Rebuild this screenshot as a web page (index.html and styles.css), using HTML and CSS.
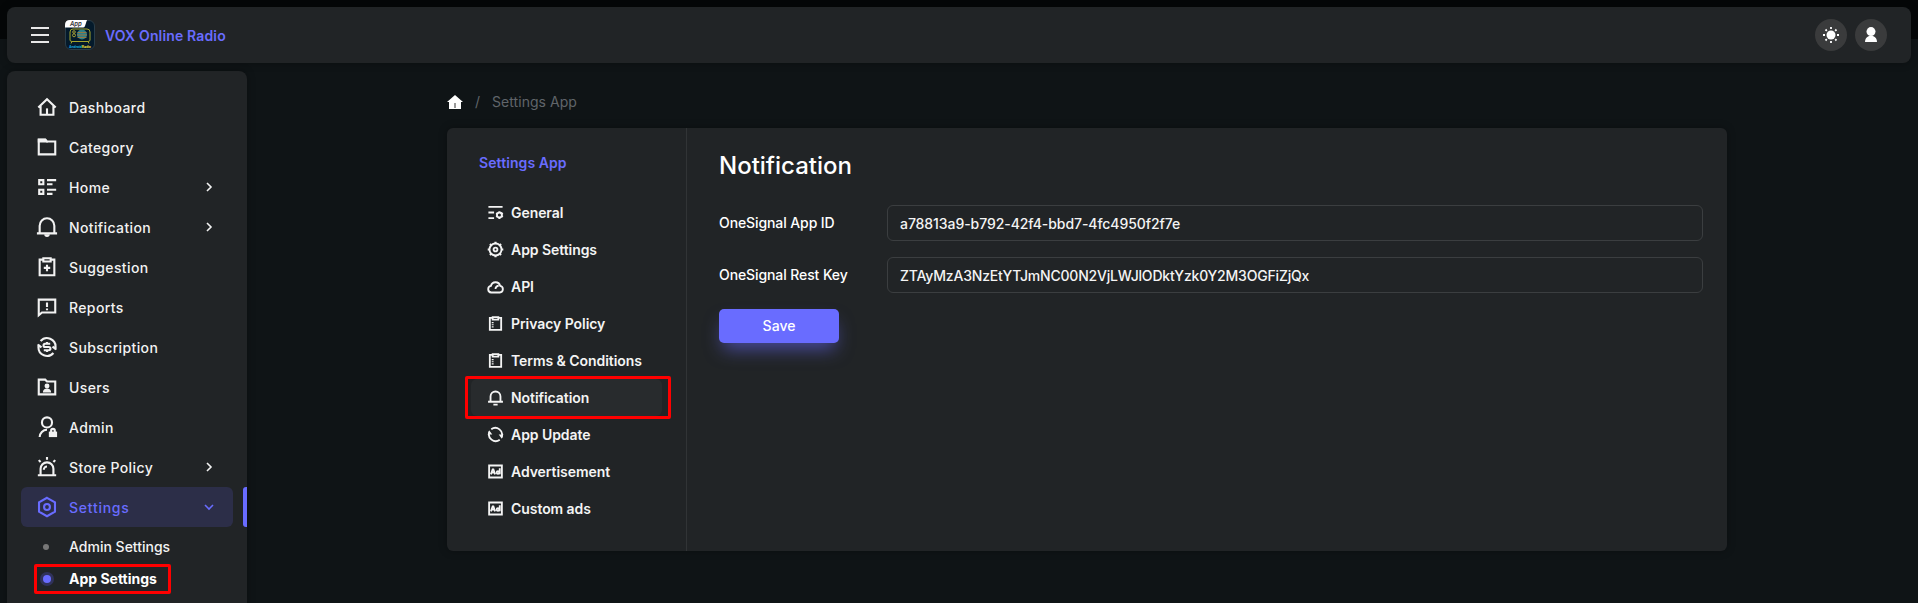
FILE: index.html
```
<!DOCTYPE html>
<html lang="en">
<head>
<meta charset="utf-8">
<title>VOX Online Radio</title>
<link rel="stylesheet" href="styles.css">
</head>
<body>
<svg class="defs" width="0" height="0">
  <symbol id="bell" viewBox="0 0 24 24"><path d="M4 19v-8.500a8 8 0 0 1 16 0V19M1 19h22"/><path class="f" d="M9 20h6a3 3 0 0 1-6 0z"/></symbol>
  <symbol id="bell2" viewBox="0 0 24 24"><path d="M5 18v-7.500a7 7 0 0 1 14 0V18M1.500 18h21M9 22h6"/></symbol>
  <symbol id="clip" viewBox="0 0 24 24"><path d="M7 4H4v17h16V4h-3M8 3h8v3.500H8zM8 10v1.500M8 13v1.500M8 16v1.500"/></symbol>
  <symbol id="chev" viewBox="0 0 10 10"><path d="M3 1l4 4-4 4"/></symbol>
  <symbol id="ad" viewBox="0 0 24 24"><path d="M3 3.500h18v17H3z"/><path d="M5.500 16l2.500-7h1l2.500 7M6.500 13.500h4M18 7.500V16"/><circle cx="15.500" cy="13.500" r="1.800"/></symbol>
</svg>
<div class="strip"></div>
<header class="topbar">
  <svg class="burger" viewBox="0 0 18 16"><path d="M0 1h18M0 8h18M0 15h18"/></svg>
  <svg class="logo" viewBox="0 0 30 30">
    <rect x=".5" y=".5" width="29" height="29" rx="5.500" fill="#041a2b" stroke="#2b3d48"/>
    <path d="M5 20V12q0-3 3-3h14q3 0 3 3v8q0 1.500-2 1.500H7q-2 0-2-1.500zM7 21.500l-1 2M23 21.500l1 2" fill="none" stroke="#a3a52c"/>
    <circle cx="17" cy="14.500" r="5" fill="#2e7f88"/>
    <path d="M12.500 12.500h9M12 15h10M12.500 17.500h9" stroke="#a2763c" stroke-width=".9"/>
    <circle cx="9" cy="12" r="1.300" fill="none" stroke="#c3b73a" stroke-width=".8"/><circle cx="9" cy="15.300" r="1.500" fill="none" stroke="#c3b73a" stroke-width=".8"/>
    <path d="M5 0h17l-2 6q-.5 1.500-2 1.500H0V5q0-5 5-5z" fill="#fff"/>
    <text x="5" y="5.900" class="logo-app">App</text>
    <text x="4" y="27.800" class="logo-name" fill="#17a9dd" textLength="22">Android<tspan fill="#e5d23c">Radio</tspan></text>
  </svg>
  <span class="brand">VOX Online Radio</span>
  <div class="actions">
    <span class="round"><svg viewBox="0 0 18 18"><circle class="f" cx="9" cy="9" r="4.500"/><path d="M9 1v2M9 15v2M1 9h2M15 9h2M3.500 3.500l1.300 1.300M13.200 13.200l1.300 1.300M3.500 14.500l1.300-1.300M13.200 4.800l1.300-1.300"/></svg></span>
    <span class="round"><svg viewBox="0 0 18 18"><circle class="f" cx="9" cy="5.600" r="4.500"/><path class="f" d="M3 16q0-4.500 4-6h4q4 1.500 4 6z"/></svg></span>
  </div>
</header>
<div class="page">
  <nav class="sidebar">
    <a class="item"><svg class="ico" viewBox="0 0 24 24"><path d="M2.500 12.500L12 3.500l9.500 9M5 10.500v10h14v-10"/><path d="M12 20.500v-7"/></svg>Dashboard</a>
    <a class="item"><svg class="ico" viewBox="0 0 24 24"><path d="M3 4h7l2 2h9v14H3z"/><path class="f" d="M2 3h9l2 4H2z"/></svg>Category</a>
    <a class="item"><svg class="ico" viewBox="0 0 24 24"><path d="M3.500 4.500H8V9H3.500zM3.500 15H8v4.500H3.500zM12 4.500h10M12 9h6M12 15h10M12 19.500h6"/></svg>Home<svg class="chev"><use href="#chev"/></svg></a>
    <a class="item"><svg class="ico"><use href="#bell"/></svg>Notification<svg class="chev"><use href="#chev"/></svg></a>
    <a class="item"><svg class="ico" viewBox="0 0 24 24"><path d="M7 4H4v17h16V4h-3M8 2.500h8v3.500H8zM12 9.500v7M8.500 13h7"/></svg>Suggestion</a>
    <a class="item"><svg class="ico" viewBox="0 0 24 24"><path d="M3 21V4h18v14H6.500zM12 7v5M12 13.500v2"/></svg>Reports</a>
    <a class="item"><svg class="ico" viewBox="0 0 24 24"><path d="M5 5.500A9.300 9.300 0 0 1 21.300 12v3M19 18.500A9.300 9.300 0 0 1 2.700 12V9M2 9.500l4 3M22 14.500l-4-3"/><path d="M15.500 8.500H10a1.700 1.700 0 0 0 0 3.500h4a1.700 1.700 0 0 1 0 3.500H8.500M12 6.500v2M12 15.500v2"/></svg>Subscription</a>
    <a class="item"><svg class="ico" viewBox="0 0 24 24"><path d="M3 4h7l2 2h9v14H3z"/><circle class="f" cx="12" cy="11" r="2.700"/><path class="f" d="M7.500 18a4.500 4.500 0 0 1 9 0z"/></svg>Users</a>
    <a class="item"><svg class="ico" viewBox="0 0 24 24"><circle cx="12" cy="7" r="5.500"/><path d="M4 23a8 8 0 0 1 8-8M16.500 17.500V16a2 2 0 0 1 4 0v1.500"/><path class="f" d="M14 17h9v6h-9z"/></svg>Admin</a>
    <a class="item"><svg class="ico" viewBox="0 0 24 24"><path d="M5 20v-6a7 7 0 0 1 14 0v6M2 21h20M12 1v3M3 4.500l2 2M21 4.500l-2 2M8.500 15a3.500 3.500 0 0 1 3.500-3.500"/></svg>Store Policy<svg class="chev"><use href="#chev"/></svg></a>
    <a class="item active"><svg class="ico" viewBox="0 0 24 24"><path d="M12 2l8.700 5v10L12 22l-8.700-5V7z"/><circle cx="12" cy="12" r="3.200"/></svg>Settings<svg class="chev down"><use href="#chev"/></svg></a>
    <a class="sub"><i class="dot"></i>Admin Settings</a>
    <a class="sub current"><i class="dot"></i>App Settings<b class="mark mark-side"></b></a>
  </nav>
  <main class="main">
    <div class="crumbs"><svg viewBox="0 0 16 14"><path d="M8 0l8 7h-2v7H2V7H0z" fill="#fff"/><path d="M8 8v5" stroke="#777" stroke-width="1.500"/></svg><span>/</span><span class="here">Settings App</span></div>
    <section class="card">
      <aside class="menu">
        <h2>Settings App</h2>
        <a><svg viewBox="0 0 24 24"><path d="M2 4h20M2 12h8M2 20h8"/><circle cx="17.500" cy="15.500" r="3.500"/><path d="M17.500 10.500v2M17.500 19v2M12.800 13l2 1M20.500 17l2 1M12.800 18l2-1M20.500 14l2-1"/></svg>General</a>
        <a><svg viewBox="0 0 24 24"><circle cx="12" cy="12" r="8.500"/><circle cx="12" cy="12" r="2.700"/><path class="teeth" d="M12 1v3M12 20v3M1 12h3M20 12h3M4.200 4.200l2 2M17.800 17.800l2 2M4.200 19.800l2-2M17.800 6.200l2-2"/></svg>App Settings</a>
        <a><svg viewBox="0 0 24 24"><path d="M6 20.500a4.700 4.700 0 0 1-.5-9.300 6.700 6.700 0 0 1 13-.2 4.800 4.800 0 0 1-.5 9.500zM12 15.500a4.500 4.500 0 0 1 4.500-4.500"/></svg>API</a>
        <a><svg><use href="#clip"/></svg>Privacy Policy</a>
        <a><svg><use href="#clip"/></svg>Terms &amp; Conditions</a>
        <a class="on"><svg><use href="#bell2"/></svg>Notification<b class="mark mark-menu"></b></a>
        <a><svg viewBox="0 0 24 24"><path d="M6 4.500A9.600 9.600 0 0 1 20.500 16M18 19.500A9.600 9.600 0 0 1 3.500 8"/><path class="f" d="M16.500 12H23l-2 6zM7.500 12H1l2-6z"/></svg>App Update</a>
        <a><svg><use href="#ad"/></svg>Advertisement</a>
        <a><svg><use href="#ad"/></svg>Custom ads</a>
      </aside>
      <form class="form">
        <h1>Notification</h1>
        <div class="row"><label for="app">OneSignal App ID</label><input id="app" value="a78813a9-b792-42f4-bbd7-4fc4950f2f7e"></div>
        <div class="row"><label for="key">OneSignal Rest Key</label><input id="key" class="tight" value="ZTAyMzA3NzEtYTJmNC00N2VjLWJlODktYzk0Y2M3OGFiZjQx"></div>
        <button type="button">Save</button>
      </form>
    </section>
  </main>
</div>
</body>
</html>
```
FILE: styles.css
```
* { box-sizing: border-box; }
body { margin: 0; height: 603px; overflow: hidden; padding: 7px 7px 0; background: #0f1416; color: #fff; font: 500 14px/20px Inter, sans-serif; }
svg { fill: none; stroke: currentColor; stroke-width: 2.3; flex: none; }
svg .f { fill: currentColor; stroke: none; }
.defs { position: absolute; }
.strip { position: absolute; left: 0; top: 0; width: 100%; height: 39px; background: #050708; }
.topbar { position: relative; display: flex; align-items: center; height: 56px; padding: 0 24px; border-radius: 8px; background: #212426; box-shadow: 0 0 8px rgba(0,0,0,.3); }
.burger { width: 18px; height: 16px; stroke: #e8e8e8; stroke-width: 2; }
.logo { width: 30px; height: 30px; margin: 0 10px 0 16px; stroke: none; stroke-width: 1; }
.logo-app { font: italic 600 6px Inter, sans-serif; fill: #333; }
.logo-name { font: 700 3.5px Inter, sans-serif; }
.brand { padding-top: 2px; color: #696cff; font-weight: 600; letter-spacing: .15px; }
.actions { display: flex; gap: 8px; margin-left: auto; }
.round { display: grid; place-items: center; width: 32px; height: 32px; border-radius: 50%; background: #3a3b3c; }
.round svg { width: 18px; height: 18px; stroke-width: 1.8; }
.page { display: flex; margin-top: 8px; }
.sidebar { width: 240px; height: 540px; padding: 16px 14px; border-radius: 8px; background: #212426; box-shadow: 0 0 8px rgba(0,0,0,.3); }
.item { position: relative; display: flex; align-items: center; height: 40px; padding: 2px 19px 0 15px; border-radius: 6px; color: #f2f2f2; letter-spacing: .38px; }
.ico { width: 22px; height: 22px; margin: 0 11px 2px 0; }
.chev { width: 10px; height: 10px; margin: 0 0 2px auto; stroke-width: 1.6; }
.down { transform: rotate(90deg); }
.active { background: #2c2e48; color: #696cff; letter-spacing: .75px; }
.active::after { content: ""; position: absolute; right: -14px; top: 0; width: 4px; height: 40px; border-radius: 3px 0 0 3px; background: #696cff; }
.sub { position: relative; display: flex; align-items: center; height: 32px; padding-left: 13px; color: #f2f2f2; }
.active + .sub { margin-top: 4px; }
.dot { width: 6px; height: 6px; margin: 0 20px 0 9px; border-radius: 50%; background: #777; }
.current { font-weight: 700; color: #fff; }
.current .dot { width: 8px; height: 8px; margin: 0 18px 0 9px; background: #696cff; box-shadow: 0 0 0 3px #30325a; }
.mark { position: absolute; border: 3px solid #f00; border-radius: 2px; }
.mark-side { left: 13px; top: 1px; width: 137px; height: 30px; }
.mark-menu { left: -6px; top: -3px; width: 206px; height: 43px; }
.main { width: 1280px; margin-left: 200px; padding-top: 21px; }
.crumbs { display: flex; align-items: center; height: 20px; color: #60656a; font-weight: 400; }
.crumbs svg { width: 16px; height: 14px; margin-right: 12px; stroke: none; }
.here { margin-left: 12px; letter-spacing: .05px; }
.card { display: flex; height: 423px; margin-top: 16px; border-radius: 6px; background: #212426; box-shadow: 0 0 8px rgba(0,0,0,.3); }
.menu { width: 240px; padding: 25px 24px; border-right: 1px solid #313436; }
.menu h2 { margin: 0 0 21px 8px; font-size: 14px; line-height: 20px; font-weight: 600; letter-spacing: .08px; color: #696cff; }
.menu a { position: relative; display: flex; align-items: center; height: 37px; padding-left: 16px; border-radius: 6px; color: #f4f4f4; font-weight: 600; letter-spacing: -.06px; }
.menu a svg { width: 17px; height: 17px; margin-right: 7px; stroke-width: 2.6; }
.menu .teeth { stroke-width: 3; }
.menu .on { background: #282b2d; }
.form { flex: 1; padding: 20px 24px 0 32px; }
.form h1 { margin: 0 0 21px; font-size: 24px; line-height: 36px; font-weight: 500; }
.row { display: flex; align-items: center; height: 36px; margin-bottom: 16px; }
.row label { width: 168px; letter-spacing: -.1px; }
.row input { flex: 1; height: 36px; padding: 0 12px; border: 1px solid #3b3e40; border-radius: 6px; background: transparent; color: #f4f4f4; font: 500 14px Inter, sans-serif; letter-spacing: -.07px; }
.row .tight { letter-spacing: -.19px; }
button { width: 120px; height: 34px; padding: 0 0 2px; border: 0; border-radius: 5px; background: #696cff; color: #fff; font: 500 14px Inter, sans-serif; box-shadow: 0 10px 18px -4px rgba(105,108,255,.55); }
```
